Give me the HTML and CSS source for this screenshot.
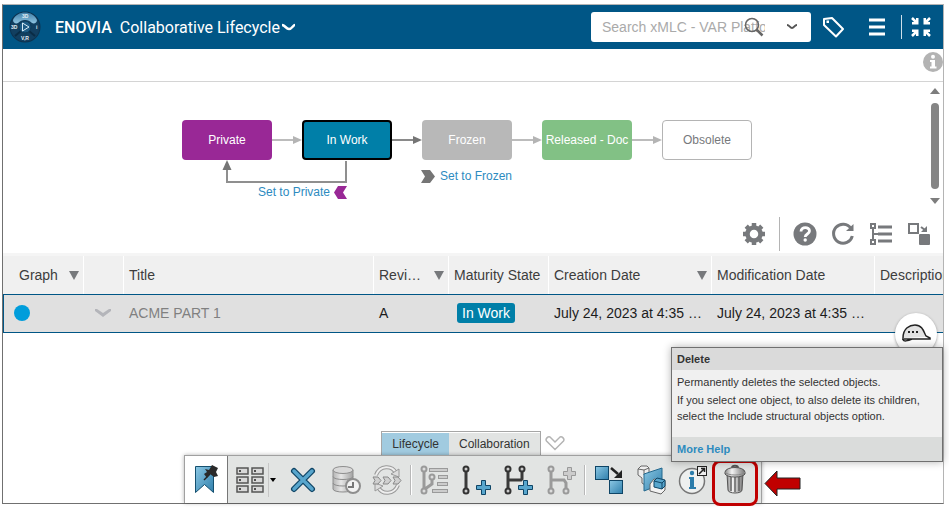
FILE: index.html
```
<!DOCTYPE html>
<html lang="en">
<head>
  <meta charset="UTF-8" />
  <meta name="viewport" content="width=device-width, initial-scale=1" />
  <title>ENOVIA - Collaborative Lifecycle</title>
  <link rel="stylesheet" href="styles.css">
</head>
<body>
  <!-- Shared gradients -->
  <svg class="defs" width="0" height="0" aria-hidden="true">
    <defs>
      <linearGradient id="blueFill" x1="0" y1="0" x2="1" y2="1">
        <stop offset="0" stop-color="#8cc8e4" />
        <stop offset="1" stop-color="#2f7fac" />
      </linearGradient>
      <linearGradient id="metalFill" x1="0" y1="0" x2="1" y2="0">
        <stop offset="0" stop-color="#8a8a8a" />
        <stop offset="0.35" stop-color="#f4f4f4" />
        <stop offset="1" stop-color="#777" />
      </linearGradient>
      <linearGradient id="greyFill" x1="0" y1="0" x2="1" y2="0">
        <stop offset="0" stop-color="#b4b4b4" />
        <stop offset="0.4" stop-color="#e6e6e6" />
        <stop offset="1" stop-color="#a2a2a2" />
      </linearGradient>
      <linearGradient id="compassTop" x1="0" y1="0" x2="0" y2="1">
        <stop offset="0" stop-color="#3f7fa8" />
        <stop offset="1" stop-color="#8fc3e0" />
      </linearGradient>
    </defs>
  </svg>

  <div class="app">
    <!-- Top bar -->
    <header class="topbar">
      <button class="compass" aria-label="Compass">
        <svg width="32" height="32" viewBox="0 0 32 32">
          <circle cx="16" cy="16" r="15.500" fill="#0d3350" />
          <circle cx="16" cy="16" r="14.500" fill="#123f60" />
          <path d="M4 9C8-1 24-1 28 9c0 3-3 4-5 3-2-2-4-3-7-3s-5 1-7 3c-2 1-5 0-5-3z" fill="url(#compassTop)" />
          <path d="M6 25l6-5M26 25l-6-5" stroke="#0a2c45" stroke-width="2" />
          <circle cx="16" cy="16" r="6" fill="#1d5a84" stroke="#0d3a59" />
          <path d="M13.500 12l6.500 4-6.500 4z" fill="none" stroke="#d8ecf7" />
          <g fill="#e4eef4" font-family="Liberation Sans, sans-serif" font-size="5" font-weight="bold">
            <text x="13" y="7">3D</text>
            <text x="2" y="18">3D</text>
            <text x="27" y="18">i</text>
            <text x="12" y="29">V,R</text>
          </g>
        </svg>
      </button>
      <h1 class="brand"><strong>ENOVIA</strong> <span>Collaborative Lifecycle</span></h1>
      <button class="app-menu" aria-label="Switch app">
        <svg width="16" height="10" viewBox="0 0 16 10"><path d="M1 3c3 0 4 4 7 4s4-4 6-4" fill="none" stroke="#fff" stroke-width="2.500" /></svg>
      </button>

      <form class="search">
        <input type="text" placeholder="Search xMLC - VAR Platform" aria-label="Search">
        <button type="button" class="search-go" aria-label="Search">
          <svg width="20" height="20" viewBox="0 0 20 20" fill="none" stroke="#666"><circle cx="8" cy="8" r="6.500" stroke-width="1.500" /><path d="M12.500 12.500l6 6" stroke-width="2.500" /></svg>
        </button>
        <button type="button" class="search-more" aria-label="Search options">
          <svg width="12" height="8" viewBox="0 0 12 8"><path d="M1 2c2.500 0 3 3 5 3s2.500-3 5-3" fill="none" stroke="#555" stroke-width="2" /></svg>
        </button>
      </form>

      <nav class="topbar-tools">
        <button aria-label="Tags">
          <svg width="24" height="24" viewBox="0 0 24 24" fill="none" stroke="#fff" stroke-width="2"><path d="M3 4l8-1 11 11-7 7.500L3 10z" stroke-linejoin="round" /><rect x="5.500" y="5.500" width="2.500" height="2.500" fill="#fff" stroke="none" /></svg>
        </button>
        <button aria-label="Menu">
          <svg width="24" height="24" viewBox="0 0 24 24"><path d="M4 5h16M4 12h16M4 19h16" stroke="#fff" stroke-width="3" /></svg>
        </button>
        <span class="topbar-line"></span>
        <button aria-label="Exit full screen">
          <svg width="24" height="24" viewBox="0 0 24 24" fill="#fff" stroke="#fff" stroke-width="2.500"><path d="M3 3l4 4M21 3l-4 4M3 21l4-4M21 21l-4-4" /><path stroke="none" d="M9.500 3v6.500H3V7h3l1-1V3zM14.500 3v6.500H21V7h-3l-1-1V3zM9.500 21v-6.500H3V17h3l1 1v3zM14.500 21v-6.500H21V17h-3l-1 1v3z" /></svg>
        </button>
      </nav>
    </header>

    <div class="infobar">
      <button aria-label="Information">
        <svg width="20" height="20" viewBox="0 0 20 20"><circle cx="10" cy="10" r="10" fill="#b3b3b3" /><circle cx="10" cy="4.800" r="2" fill="#fff" /><path d="M7 8h5v6.500h1.500V16.500h-6.500v-2h1.500v-4.500H7z" fill="#fff" /></svg>
      </button>
    </div>

    <!-- Maturity graph -->
    <section class="graph">
      <div class="states">
        <button class="state private">Private</button>
        <svg class="wire" width="30" height="10"><path d="M0 5h22" /><path class="tip" d="M21 1l9 4-9 4z" /></svg>
        <button class="state in-work">In Work</button>
        <svg class="wire dark" width="30" height="10"><path d="M0 5h22" /><path class="tip" d="M21 1l9 4-9 4z" /></svg>
        <button class="state frozen">Frozen</button>
        <svg class="wire" width="30" height="10"><path d="M0 5h22" /><path class="tip" d="M21 1l9 4-9 4z" /></svg>
        <button class="state released">Released - Doc</button>
        <svg class="wire" width="30" height="10"><path d="M0 5h22" /><path class="tip" d="M21 1l9 4-9 4z" /></svg>
        <button class="state obsolete">Obsolete</button>

        <svg class="loop" width="130" height="24"><path d="M124 1v21H5V8" fill="none" stroke="#8f8f8f" stroke-width="2" /><path d="M5 0l4.500 10h-9z" fill="#757575" /></svg>
        <a class="move to-private" href="#">Set to Private
          <svg width="13" height="13"><path d="M4 0h9l-4 6.500 4 6.500H4L0 6.500z" fill="#992896" /></svg>
        </a>
        <a class="move to-frozen" href="#">
          <svg width="14" height="13"><path d="M0 0h9l5 6.500-5 6.500H0l4-6.500z" fill="#757575" /></svg>
          Set to Frozen</a>
      </div>
      <div class="scroll">
        <svg width="10" height="6"><path d="M5 0l5 6H0z" fill="#7d7d7d" /></svg>
        <span class="thumb"></span>
        <svg width="10" height="6"><path d="M0 0h10L5 6z" fill="#7d7d7d" /></svg>
      </div>
    </section>

    <!-- Table toolbar -->
    <div class="tools">
      <button aria-label="Settings">
        <svg width="24" height="24" viewBox="0 0 24 24" fill="none" stroke="#77797c"><circle cx="12" cy="12" r="6.500" stroke-width="4.500" /><path d="M12 1v3M12 20v3M1 12h3M20 12h3M4.200 4.200l2.200 2.200M17.600 17.600l2.200 2.200M4.200 19.800l2.200-2.200M17.600 6.400l2.200-2.200" stroke-width="4.500" /></svg>
      </button>
      <span class="tools-line"></span>
      <button aria-label="Help">
        <svg width="24" height="24" viewBox="0 0 24 24"><circle cx="12" cy="12" r="11.500" fill="#77797c" /><path d="M8 9.500c0-5 8.500-5 8.500-.5 0 3-4.300 3-4.300 6" fill="none" stroke="#fff" stroke-width="2.800" /><circle cx="12.200" cy="18" r="1.700" fill="#fff" /></svg>
      </button>
      <button aria-label="Refresh">
        <svg width="24" height="24" viewBox="0 0 24 24"><path d="M20 6.500A9.500 9.500 0 1 0 21.300 14" fill="none" stroke="#77797c" stroke-width="3" /><path d="M22.500 2v7H15z" fill="#77797c" /></svg>
      </button>
      <button aria-label="Structure">
        <svg width="24" height="24" viewBox="0 0 24 24" fill="none" stroke="#77797c"><path d="M9 5h14M9 12h14M9 19h14" stroke-width="3" /><rect x="2" y="2" width="4" height="4" stroke-width="2" /><rect x="2" y="18" width="4" height="4" stroke-width="2" /><path d="M4 6v12M4 12h5" stroke-width="2" /></svg>
      </button>
      <button aria-label="Swap">
        <svg width="24" height="24" viewBox="0 0 24 24"><rect x="2" y="2" width="9" height="9" fill="none" stroke="#77797c" stroke-width="2" /><rect x="12" y="12" width="11" height="11" rx="1" fill="#77797c" /><path d="M14 5l4 3" stroke="#77797c" stroke-width="2" /><path d="M20 4v6h-6z" fill="#77797c" /></svg>
      </button>
    </div>

    <!-- Objects -->
    <div class="grid">
      <table>
        <colgroup>
          <col class="c-graph"><col class="c-open"><col class="c-title"><col class="c-rev"><col class="c-state"><col class="c-date"><col class="c-date"><col class="c-desc">
        </colgroup>
        <thead>
          <tr>
            <th class="sort first">Graph</th>
            <th></th>
            <th>Title</th>
            <th class="sort">Revi…</th>
            <th>Maturity State</th>
            <th class="sort">Creation Date</th>
            <th>Modification Date</th>
            <th>Description</th>
          </tr>
        </thead>
        <tbody>
          <tr>
            <td><span class="dot"></span></td>
            <td><svg class="expand" width="18" height="10"><path d="M1 1h2l6 4 6-4h2v2l-8 6-8-6z" fill="#b4b5ba" /></svg></td>
            <td class="muted">ACME PART 1</td>
            <td>A</td>
            <td><span class="badge">In Work</span></td>
            <td>July 24, 2023 at 4:35 …</td>
            <td>July 24, 2023 at 4:35 …</td>
            <td></td>
          </tr>
        </tbody>
      </table>
    </div>

    <!-- Action bar -->
    <footer class="dock">
      <div class="tabs">
        <div class="tab-list">
          <button class="tab active">Lifecycle</button>
          <button class="tab">Collaboration</button>
        </div>
        <button class="tabs-more" aria-label="Collapse action bar">
          <svg width="20" height="16" viewBox="0 0 20 16"><path d="M5 2l5 5 5-5c2-1 5 2 3.500 4L10 14.500 1.500 6C0 4 3 1 5 2z" fill="#fff" stroke="#b4b4b4" stroke-width="1.500" /></svg>
        </button>
      </div>
      <div class="actions">
        <button class="action pinned" aria-label="Bookmark">
          <svg width="32" height="32" viewBox="0 0 32 32"><path d="M5.500 2.500h18v26l-9-8-9 8z" fill="url(#blueFill)" stroke="#15506f" /><path d="M14 16l6-6" stroke="#222" stroke-width="1.500" /><path d="M15 5l4 1 3-5 6 3-2 4 2 4-4 1-4-3-3 4-3-4 3-2z" fill="#2a2a2a" /></svg>
        </button>
        <button class="action wide" aria-label="Views">
          <svg width="32" height="32" viewBox="0 0 32 32" fill="#d8d8d8" stroke="#555" stroke-width="1.500"><rect x="3" y="4" width="11" height="6" /><rect x="18" y="4" width="11" height="6" /><rect x="3" y="13" width="11" height="6" /><rect x="18" y="13" width="11" height="6" /><rect x="3" y="22" width="11" height="6" /><rect x="18" y="22" width="11" height="6" /><path d="M6 6v2M21 6v2M6 15v2M21 15v2M6 24v2M21 24v2" stroke="#222" /></svg>
          <span class="drop"><svg width="6" height="4"><path d="M0 0h6L3 4z" fill="#000" /></svg></span>
        </button>
        <button class="action" aria-label="Close">
          <svg width="32" height="32" viewBox="0 0 32 32"><path d="M7 7l18 18M25 7L7 25" stroke="#0f4566" stroke-width="6" stroke-linecap="round" /><path d="M7 7l18 18M25 7L7 25" stroke="#58a6cd" stroke-width="3.500" stroke-linecap="round" /></svg>
        </button>
        <button class="action" aria-label="History">
          <svg width="32" height="32" viewBox="0 0 32 32" stroke="#8e8e8e"><path d="M4 6v19c0 4 20 4 20 0V6z" fill="url(#greyFill)" /><ellipse cx="14" cy="6" rx="10" ry="3.500" fill="#d9d9d9" /><path d="M4 12.500c0 4 20 4 20 0M4 19c0 4 20 4 20 0" fill="none" /><circle cx="24" cy="22" r="7" fill="#f2f2f2" stroke-width="2" /><path d="M24 18v5h-5" fill="none" stroke="#777" stroke-width="2" /></svg>
        </button>
        <button class="action" aria-label="Update lifecycle">
          <svg width="32" height="32" viewBox="0 0 32 32" fill="none" stroke="#999"><path d="M5 11C9 1 21 1 25 9" stroke-width="4" /><path d="M5 11C9 1 21 1 25 9" stroke="#eee" stroke-width="2" /><path d="M20 10l8-5v8z" fill="#ddd" /><path d="M27 21c-4 10-16 10-20 2" stroke-width="4" /><path d="M27 21c-4 10-16 10-20 2" stroke="#eee" stroke-width="2" /><path d="M12 22l-8 5v-8z" fill="#ddd" /><path d="M2 13h5l3 3.500L7 20H2l2-3.500zM12 13h5l3 3.500-3 3.500h-5l2-3.500zM22 13h5l3 3.500-3 3.500h-5l2-3.500z" fill="#d0d0d0" stroke="#888" /></svg>
        </button>
        <span class="actions-line"></span>
        <button class="action" aria-label="Revision list">
          <svg width="32" height="32" viewBox="0 0 32 32" fill="none" stroke="#9a9a9a"><path d="M5 7v18M13 15v5l-7 5" stroke-width="3" /><g fill="#ddd" stroke-width="2"><circle cx="5" cy="5" r="2.500" /><circle cx="5" cy="27" r="2.500" /><circle cx="13" cy="13" r="2.500" /></g><g fill="#ccc"><rect x="10.500" y="4.500" width="18" height="3" /><rect x="19.500" y="11.500" width="9" height="3" /><rect x="18.500" y="18.500" width="10" height="3" /><rect x="13.500" y="25.500" width="15" height="3" /></g></svg>
        </button>
        <button class="action" aria-label="New revision">
          <svg width="32" height="32" viewBox="0 0 32 32"><path d="M5 5v22" stroke="#3a3a3a" stroke-width="3" /><g fill="#ccc" stroke="#333" stroke-width="2"><circle cx="5" cy="5" r="2.500" /><circle cx="5" cy="27" r="2.500" /></g><path d="M20.500 16.500h4v5h5v4h-5v5h-4v-5h-5v-4h5z" fill="#58a6cd" stroke="#0f4566" /></svg>
        </button>
        <button class="action" aria-label="New branch">
          <svg width="32" height="32" viewBox="0 0 32 32"><path d="M5 5v22M5 16h13l1-1V6" fill="none" stroke="#3a3a3a" stroke-width="3" /><g fill="#ccc" stroke="#333" stroke-width="2"><circle cx="5" cy="5" r="2.500" /><circle cx="19" cy="5" r="2.500" /><circle cx="5" cy="27" r="2.500" /></g><path d="M20.500 16.500h4v5h5v4h-5v5h-4v-5h-5v-4h5z" fill="#58a6cd" stroke="#0f4566" /></svg>
        </button>
        <button class="action" aria-label="New revision from">
          <svg width="32" height="32" viewBox="0 0 32 32"><path d="M6 5v22M6 16h13l2 3v7" fill="none" stroke="#9a9a9a" stroke-width="3" /><g fill="#ddd" stroke="#9a9a9a" stroke-width="2"><circle cx="6" cy="5" r="2.500" /><circle cx="6" cy="27" r="2.500" /><circle cx="21" cy="27" r="2.500" /></g><path d="M22.500 3.500h4v4h4v4h-4v4h-4v-4h-4v-4h4z" fill="#ccc" stroke="#999" /></svg>
        </button>
        <span class="actions-line"></span>
        <button class="action" aria-label="Replace">
          <svg width="32" height="32" viewBox="0 0 32 32"><g fill="url(#blueFill)" stroke="#0f4566"><rect x="2.500" y="2.500" width="13" height="13" /><rect x="16.500" y="16.500" width="13" height="13" /></g><path d="M18 4l7 6" stroke="#222" stroke-width="2.500" /><path d="M29 6v8h-8z" fill="#222" /></svg>
        </button>
        <button class="action" aria-label="Compare">
          <svg width="32" height="32" viewBox="0 0 32 32" stroke="#666" stroke-linejoin="round"><path d="M3 5l3-3h6l2 2v6l-4 2v9l-3-2v-5l-4-3z" fill="#eee" /><path d="M3 5l6 1 5-2M9 6v5" fill="none" /><path d="M9 10l18-6v16L9 27z" fill="url(#blueFill)" stroke="#23688e" /><path d="M15 20l4-5 11 2v9l-4 4-11-3z" fill="#f2f2f2" /><path d="M19 17l3-3 8 2v6l-3 3-8-2z" fill="#58a6cd" stroke="#0f4566" /><path d="M19 17l8 2 3-3M27 19v6" fill="none" stroke="#0f4566" /></svg>
        </button>
        <button class="action" aria-label="Properties">
          <svg width="32" height="32" viewBox="0 0 32 32"><circle cx="15" cy="17" r="12.500" fill="#eef0ef" stroke="#777" stroke-width="1.500" /><rect x="20.500" y="2.500" width="9" height="9" fill="#eee" stroke="#222" /><path d="M22 10l5-5M24 4.500h3.500V8" fill="none" stroke="#222" stroke-width="1.500" /><circle cx="15" cy="9" r="2.200" fill="#2c7dab" /><path d="M12 13h5v10h2v2h-7v-2h1v-8h-1z" fill="#2c7dab" /></svg>
        </button>
        <div class="marked">
          <button class="action" aria-label="Delete">
            <svg width="32" height="32" viewBox="0 0 32 32" stroke="#555"><path d="M13 4c0-3 6-3 6 0" fill="none" stroke-width="2" /><path d="M8 10h16l-1 16c0 4-14 4-14 0z" fill="url(#metalFill)" /><path d="M12 13v14M16 13v15M20 13v14" stroke="#666" stroke-width="1.500" /><path d="M6 8c1-6 19-6 20 0v2c-2 4-18 4-20 0z" fill="url(#metalFill)" /><path d="M6 8c2 4 18 4 20 0" fill="none" stroke="#888" /></svg>
          </button>
          <span class="ring"></span>
          <svg class="pointer" width="37" height="27"><path d="M1 13.500L13 1v7h23v11H13v7z" fill="#c00000" stroke="#222" /></svg>
        </div>
      </div>
    </footer>

    <button class="assistant" aria-label="Assistant">
      <svg width="30" height="20" viewBox="0 0 30 20"><path d="M2 14C2 4 9 1 14 1c8 0 8 6 10 12z" fill="#e2e2e2" /><path d="M2 14C2 4 9 1 14 1c8 0 9 8 11 11l4 2v1H1M2 15c0 3 5 2 9 0" fill="none" stroke="#222" stroke-width="1.500" /><path d="M7 8h2M11 8h2M15 8h2" stroke="#222" stroke-width="2" /></svg>
    </button>

    <div class="tooltip" role="tooltip">
      <h2>Delete</h2>
      <div class="tooltip-text">
        <p>Permanently deletes the selected objects.</p>
        <p>If you select one object, to also delete its children, select the Include structural objects option.</p>
      </div>
      <div class="tooltip-more"><a href="#">More Help</a></div>
    </div>
  </div>
</body>
</html>
```
FILE: styles.css
```
/* Resets */
* {
  box-sizing: border-box;
}
body {
  margin: 0;
  padding: 4px 5px 8px 2px;
  min-height: 100vh;
  display: flex;
  background: #fff;
  color: #333;
  font-family: "Liberation Sans", Arial, sans-serif;
  font-size: 14px;
}
button {
  margin: 0;
  padding: 0;
  border: none;
  background: none;
  color: inherit;
  font: inherit;
  cursor: pointer;
}
svg {
  display: block;
}
a {
  color: #2d8bbf;
  text-decoration: none;
}
.defs {
  position: absolute;
}

.app {
  position: relative;
  flex: 1;
  min-width: 0;
  display: flex;
  flex-direction: column;
  border: 1px solid #b4b4b4;
  border-left-color: #707070;
  border-bottom-color: #707070;
}

/* Top bar */
.topbar {
  display: flex;
  align-items: center;
  height: 44px;
  padding: 0 10px 0 6px;
  background: #005686;
  color: #fff;
}
.brand {
  margin: 0 1px 0 14px;
  font-family: Roboto, sans-serif;
  font-size: 16px;
  font-weight: 400;
  white-space: nowrap;
}
.brand strong {
  margin-right: 4px;
  font-weight: 500;
}
.search {
  position: relative;
  display: flex;
  align-items: center;
  width: 220px;
  height: 30px;
  margin-left: auto;
  padding-left: 11px;
  border-radius: 3px;
  background: #fff;
}
.search input {
  width: 163px;
  padding: 0;
  border: none;
  outline: none;
  background: none;
  font: inherit;
}
.search input::placeholder {
  color: #aaa;
}
.search-go {
  position: absolute;
  left: 153px;
  top: 5px;
}
.search-more {
  margin-left: 21px;
}
.topbar-tools {
  display: flex;
  align-items: center;
  margin-left: 10px;
}
.topbar-tools button + button {
  margin-left: 20px;
}
.topbar-line {
  width: 1px;
  height: 24px;
  margin: 0 7px 0 12px;
  background: #cfe0ea;
}

.infobar {
  display: flex;
  justify-content: flex-end;
  height: 33px;
  padding-top: 3px;
  border-bottom: 1px solid #d4d4d4;
}
.infobar button {
  height: 20px;
}

/* Maturity graph */
.graph {
  display: flex;
  justify-content: space-between;
  height: 126px;
  padding: 6px 3px 4px 179px;
}
.states {
  position: relative;
  display: flex;
  align-items: center;
  height: 40px;
  margin-top: 32px;
  font-size: 12px;
}
.state {
  width: 90px;
  height: 40px;
  border-radius: 4px;
  color: #fff;
  white-space: nowrap;
}
.private {
  background: #992896;
}
.in-work {
  border: 2px solid #000;
  background: #007fa8;
}
.frozen {
  background: #b8b8b8;
}
.released {
  background: #82c185;
}
.obsolete {
  border: 1px solid #b4b4b4;
  background: #fff;
  color: #77797c;
}
.wire path {
  fill: none;
  stroke: #bcbcbc;
  stroke-width: 2;
}
.wire .tip {
  fill: #b4b4b4;
  stroke: none;
}
.wire.dark path {
  stroke: #8a8a8a;
}
.wire.dark .tip {
  fill: #757575;
  stroke: none;
}
.loop {
  position: absolute;
  left: 40px;
  top: 40px;
}
.move {
  position: absolute;
  display: flex;
  align-items: center;
  gap: 4px;
  white-space: nowrap;
}
.to-private {
  left: 76px;
  top: 65px;
}
.to-frozen {
  left: 239px;
  top: 49px;
  gap: 5px;
}
.scroll {
  display: flex;
  flex-direction: column;
  align-items: center;
  gap: 9px;
}
.thumb {
  flex: 1;
  width: 8px;
  border-radius: 4px;
  background: #858585;
}

/* Table toolbar */
.tools {
  display: flex;
  justify-content: flex-end;
  align-items: center;
  gap: 14px;
  height: 45px;
  padding: 6px 12px 0 0;
}
.tools-line {
  width: 1px;
  height: 34px;
  margin: 0 -1px;
  background: #b4b4b4;
}

/* Object table */
.grid {
  overflow: hidden;
  border-top: 3px solid #f5f5f5;
}
table {
  min-width: 100%;
  border-collapse: separate;
  border-spacing: 0;
  table-layout: fixed;
  width: 0;
}
.c-graph {
  width: 81px;
}
.c-open {
  width: 40px;
}
.c-title {
  width: 250px;
}
.c-rev {
  width: 75px;
}
.c-state {
  width: 100px;
}
.c-date {
  width: 163px;
}
.c-desc {
  width: 120px;
}
th {
  position: relative;
  height: 38px;
  padding: 0 5px;
  border-right: 1px solid #fff;
  background: #f0f0f0;
  color: #3d3d3d;
  font-weight: 400;
  text-align: left;
  white-space: nowrap;
}
th.first {
  padding-left: 16px;
}
th.sort::after {
  content: "";
  position: absolute;
  right: 4px;
  top: 15px;
  border: 5px solid transparent;
  border-top: 9px solid #77797c;
  border-bottom: none;
}
td {
  height: 39px;
  padding: 0 6px 2px 5px;
  border-top: 1px solid #005686;
  border-bottom: 1px solid #005686;
  background: #e0e0e0;
  color: #1c1c1c;
  white-space: nowrap;
}
td:first-child {
  padding-left: 10px;
  border-left: 1px solid #005686;
}
.muted {
  color: #808080;
}
.dot {
  display: block;
  width: 16px;
  height: 16px;
  border-radius: 50%;
  background: #009ddb;
}
.expand {
  margin-left: 5px;
}
.badge {
  display: inline-block;
  margin-left: 3px;
  padding: 0 5px;
  border-radius: 3px;
  background: #007fa8;
  color: #fff;
  line-height: 20px;
}

/* Action bar */
.dock {
  display: flex;
  flex-direction: column;
  align-items: center;
  margin-top: auto;
}
.tabs {
  display: flex;
  align-items: center;
  gap: 4px;
  font-size: 12px;
}
.tab-list {
  display: flex;
  height: 24px;
  padding-top: 1px;
  border: 1px solid #a6a6a6;
  border-bottom: none;
  background: #fff;
}
.tab {
  padding: 0 10px;
  background: #e2e4e3;
}
.tab.active {
  background: #a1cbe0;
}
.actions {
  display: flex;
  align-items: center;
  height: 48px;
  padding-right: 5px;
  border: 1px solid #a0a0a0;
  border-bottom: none;
  background: #e2e4e3;
  box-shadow: 0 0 4px rgba(0, 0, 0, 0.3);
}
.action {
  display: flex;
  align-items: center;
  justify-content: center;
  width: 42px;
  height: 47px;
}
.action.pinned {
  width: 43px;
  border-right: 1px solid #777;
  background: #fff;
}
.action.wide {
  width: 54px;
}
.drop {
  display: flex;
  align-items: center;
  height: 34px;
  margin-left: 2px;
  padding-left: 1px;
  border-left: 1px solid #c6c6c6;
}
.actions-line {
  width: 2px;
  height: 30px;
  margin: 0 2px;
  border-left: 1px solid #b8b8b8;
  background: #fff;
}
.marked {
  position: relative;
}
.ring {
  position: absolute;
  inset: 4px -2px -3px -2px;
  border: 3px solid #c00000;
  border-radius: 8px;
  pointer-events: none;
}
.pointer {
  position: absolute;
  left: 50px;
  top: 14px;
}

/* Things that float over the table */
.assistant {
  position: absolute;
  right: 6px;
  bottom: 148px;
  display: flex;
  align-items: center;
  justify-content: center;
  width: 42px;
  height: 42px;
  border-radius: 50%;
  background: #fff;
  box-shadow: 0 1px 3px rgba(0, 0, 0, 0.4);
}
.tooltip {
  position: absolute;
  right: 0;
  bottom: 41px;
  width: 272px;
  border: 1px solid #707070;
  background: #f0f0f0;
  box-shadow: 0 0 8px rgba(0, 0, 0, 0.3);
  font-size: 11px;
  line-height: 16px;
}
.tooltip h2 {
  margin: 0;
  padding: 3px 5px;
  background: #dadada;
  font-size: 11px;
}
.tooltip-text {
  padding: 4px 5px 11px;
}
.tooltip p {
  margin: 0 0 2px;
}
.tooltip-more {
  padding: 4px 5px;
  background: #dadcdb;
  font-weight: bold;
}
```
